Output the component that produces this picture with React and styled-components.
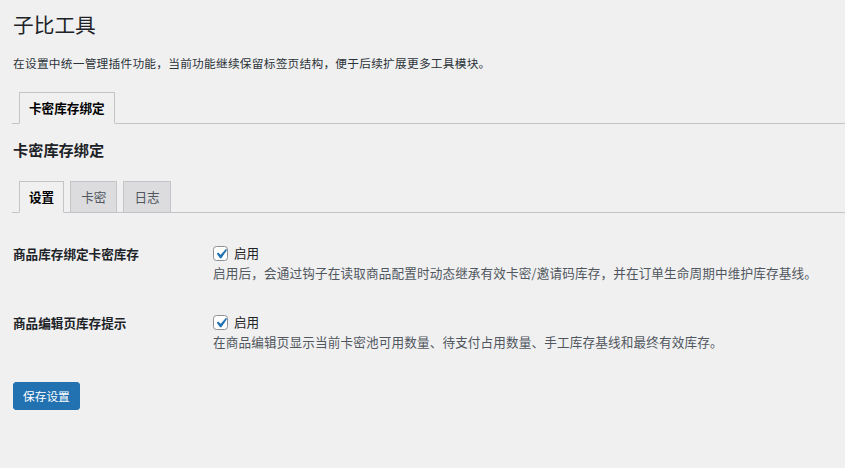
import React from "react";
import styled, { createGlobalStyle } from "styled-components";

const Global = createGlobalStyle`
  html, body {
    margin: 0;
    padding: 0;
    background: #f0f0f1;
  }
  body {
    font-family: "Noto Sans CJK SC", "Noto Sans", sans-serif;
    color: #1d2327;
    -webkit-font-smoothing: antialiased;
  }
`;

const Wrap = styled.div`
  padding: 10px 0 40px 12px;
  min-height: 418px;
`;

const Title = styled.h1`
  margin: 0;
  font-size: 20.7px;
  font-weight: 400;
  line-height: 28px;
  color: #1d2327;
  padding-left: 1px;
`;

const Intro = styled.p`
  margin: 16px 0 0;
  font-size: 11.7px;
  line-height: 18px;
  color: #2c3338;
  padding-left: 1px;
  letter-spacing: 0.25px;
`;

const TabBar = styled.nav`
  display: flex;
  align-items: flex-end;
  gap: 6px;
  margin-top: ${(p) => p.$top}px;
  padding-left: 7px;
  border-bottom: 1px solid #c3c4c7;
`;

const Tab = styled.a`
  display: flex;
  align-items: center;
  box-sizing: border-box;
  height: ${(p) => (p.$active ? 32 : 31)}px;
  margin-bottom: ${(p) => (p.$active ? -1 : 0)}px;
  padding: 0 ${(p) => (p.$active ? 9 : 10)}px;
  border: 1px solid #c3c4c7;
  border-bottom: ${(p) => (p.$active ? "1px solid #f0f0f1" : "none")};
  background: ${(p) => (p.$active ? "#f0f0f1" : "#dcdcde")};
  color: ${(p) => (p.$active ? "#000" : "#50575e")};
  font-size: 12.6px;
  font-weight: ${(p) => (p.$active ? 700 : 400)};
  line-height: 18px;
  text-decoration: none;
  cursor: pointer;
`;

const SectionTitle = styled.h2`
  margin: 15px 0 0;
  font-size: 15.2px;
  font-weight: 700;
  line-height: 20px;
  color: #1d2327;
  padding-left: 1px;
`;

const Form = styled.div`
  display: flex;
  flex-direction: column;
  gap: 31px;
  margin-top: 31px;
`;

const Row = styled.div`
  display: flex;
  align-items: flex-start;
`;

const Label = styled.div`
  width: 200px;
  padding-left: 1px;
  padding-top: 1px;
  font-size: 12.6px;
  font-weight: 700;
  line-height: 18px;
  color: #1d2327;
`;

const Field = styled.div`
  display: flex;
  flex-direction: column;
  gap: 2px;
`;

const CheckLine = styled.label`
  display: flex;
  align-items: center;
  gap: 6px;
  height: 18px;
  font-size: 12.6px;
  line-height: 18px;
  color: #1d2327;
`;

const Box = styled.span`
  position: relative;
  box-sizing: border-box;
  width: 15px;
  height: 15px;
  border: 1px solid #8c8f94;
  border-radius: 3.5px;
  background: #fff;
  svg {
    position: absolute;
    left: -3px;
    top: -3px;
  }
`;

const Desc = styled.p`
  margin: 0;
  font-size: 12.6px;
  line-height: 18px;
  color: #50575e;
  letter-spacing: 0.15px;
`;

const SaveButton = styled.button`
  align-self: flex-start;
  box-sizing: border-box;
  height: 28px;
  margin: 0 0 0 1px;
  padding: 0 9px;
  border: 1px solid #2271b1;
  border-radius: 3px;
  background: #2271b1;
  color: #fff;
  font-family: inherit;
  font-size: 11.7px;
  line-height: 26px;
  cursor: pointer;
`;

const Check = () => (
  <svg width="20" height="20" viewBox="0 0 20 20" aria-hidden="true">
    <path
      d="M14.83 4.89l1.34.94-5.81 8.38H9.02L5.78 9.67l1.34-1.25 2.57 2.4z"
      fill="#2271b1"
    />
  </svg>
);

const settings = [
  {
    label: "商品库存绑定卡密库存",
    desc: "启用后，会通过钩子在读取商品配置时动态继承有效卡密/邀请码库存，并在订单生命周期中维护库存基线。",
  },
  {
    label: "商品编辑页库存提示",
    desc: "在商品编辑页显示当前卡密池可用数量、待支付占用数量、手工库存基线和最终有效库存。",
  },
];

export default function App() {
  return (
    <>
      <Global />
      <Wrap>
        <Title>子比工具</Title>
        <Intro>在设置中统一管理插件功能，当前功能继续保留标签页结构，便于后续扩展更多工具模块。</Intro>
        <TabBar $top={20}>
          <Tab $active>卡密库存绑定</Tab>
        </TabBar>
        <SectionTitle>卡密库存绑定</SectionTitle>
        <TabBar $top={22}>
          <Tab $active>设置</Tab>
          <Tab>卡密</Tab>
          <Tab>日志</Tab>
        </TabBar>
        <Form>
          {settings.map((s) => (
            <Row key={s.label}>
              <Label>{s.label}</Label>
              <Field>
                <CheckLine>
                  <Box>
                    <Check />
                  </Box>
                  启用
                </CheckLine>
                <Desc>{s.desc}</Desc>
              </Field>
            </Row>
          ))}
          <SaveButton type="button">保存设置</SaveButton>
        </Form>
      </Wrap>
    </>
  );
}
